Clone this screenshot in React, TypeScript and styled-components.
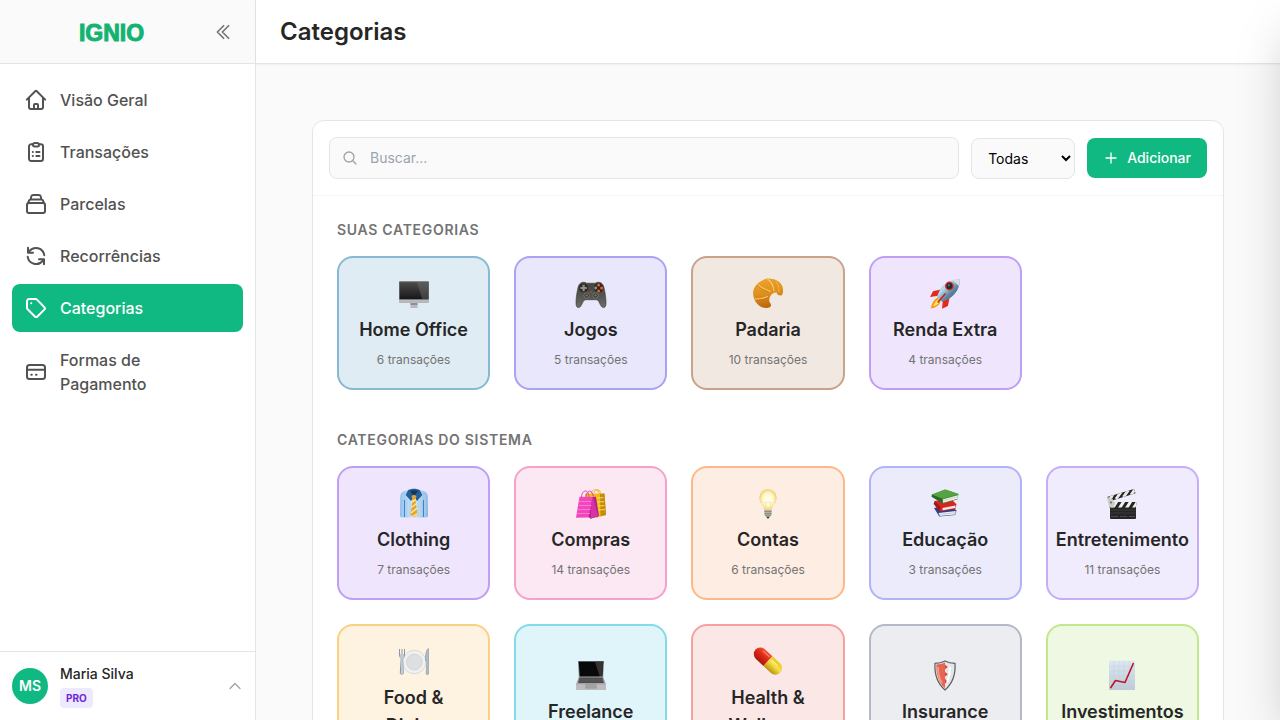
import React from "react";
import styled, { createGlobalStyle } from "styled-components";
import { HiOutlineChevronDoubleLeft, HiOutlineChevronUp, HiOutlineMagnifyingGlass, HiOutlinePlus } from "react-icons/hi2";

const GlobalStyle = createGlobalStyle`
  *, *::before, *::after { box-sizing: border-box; }
  body {
    margin: 0;
    background: #fafafa;
    color: #262626;
    font-family: Inter, "Liberation Sans", sans-serif;
    font-size: 16px;
    line-height: 24px;
    -webkit-font-smoothing: antialiased;
  }
  h1, h2, h3, p, ul { margin: 0; padding: 0; }
  button, input, select { font: inherit; }
`;

const Shell = styled.div`
  display: flex;
  height: 100vh;
  overflow: hidden;
`;

const Sidebar = styled.aside`
  display: flex;
  flex-direction: column;
  flex: 0 0 256px;
  background: #fff;
  border-right: 1px solid #e5e5e5;
`;

const SidebarTop = styled.div`
  display: grid;
  grid-template-columns: 32px 1fr 32px;
  align-items: center;
  height: 64px;
  padding: 0 16px;
  background: #fafafa;
  border-bottom: 1px solid #e5e5e5;
`;

const Logo = styled.a`
  grid-column: 1 / 3;
  justify-self: center;
  padding-top: 2px;
  color: #15b371;
  font-family: "Liberation Sans", Arial, sans-serif;
  font-size: 23px;
  font-weight: 700;
  line-height: 32px;
  text-decoration: none;
  -webkit-text-stroke: 1px #15b371;
`;

const IconButton = styled.button`
  display: grid;
  place-items: center;
  width: 32px;
  height: 32px;
  padding: 0;
  border: 0;
  border-radius: 8px;
  background: transparent;
  color: #737373;
  cursor: pointer;
`;

const Nav = styled.nav`
  flex: 1;
  padding: 12px;
`;

const NavList = styled.ul`
  display: flex;
  flex-direction: column;
  gap: 4px;
  list-style: none;
`;

const NavLink = styled.a<{ $active?: boolean }>`
  display: flex;
  align-items: center;
  gap: 12px;
  padding: 12px;
  border-radius: 8px;
  background: ${(p) => (p.$active ? "#10b981" : "transparent")};
  color: ${(p) => (p.$active ? "#fff" : "#525252")};
  font-weight: 500;
  text-decoration: none;

  svg { flex: none; }
`;

const UserButton = styled.button`
  display: flex;
  align-items: center;
  gap: 12px;
  padding: 12px;
  border: 0;
  border-top: 1px solid #e5e5e5;
  background: #fff;
  color: #a3a3a3;
  text-align: left;
  cursor: pointer;
`;

const Avatar = styled.span`
  display: grid;
  place-items: center;
  width: 36px;
  height: 36px;
  border-radius: 50%;
  background: #10b981;
  color: #fff;
  font-size: 14px;
  font-weight: 600;
`;

const UserInfo = styled.span`
  display: flex;
  flex: 1;
  flex-direction: column;
  align-items: flex-start;
  gap: 4px;
`;

const UserName = styled.span`
  color: #262626;
  font-size: 14px;
  font-weight: 500;
  line-height: 20px;
`;

const Plan = styled.span`
  padding: 0 6px;
  border-radius: 4px;
  background: #ede9fe;
  color: #6d28d9;
  font-size: 10px;
  font-weight: 700;
  line-height: 20px;
`;

const Page = styled.div`
  display: flex;
  flex: 1;
  flex-direction: column;
  min-width: 0;
`;

const PageHeader = styled.header`
  display: flex;
  flex: 0 0 64px;
  align-items: center;
  padding: 0 24px;
  background: #fff;
  border-bottom: 1px solid #e5e5e5;
  box-shadow: 0 1px 2px rgba(0, 0, 0, 0.05);
`;

const Title = styled.h1`
  font-size: 24px;
  font-weight: 600;
  line-height: 32px;
`;

const Main = styled.main`
  flex: 1;
  overflow-y: auto;
  padding: 56px;
  scrollbar-width: none;
`;

const Panel = styled.section`
  border: 1px solid #e5e5e5;
  border-radius: 12px;
  background: #fff;
`;

const Toolbar = styled.form`
  display: flex;
  align-items: center;
  gap: 12px;
  padding: 16px;
  border-bottom: 1px solid #f5f5f5;
`;

const SearchBox = styled.label`
  display: flex;
  flex: 1;
  align-items: center;
  gap: 12px;
  height: 42px;
  padding: 0 12px;
  border: 1px solid #e5e5e5;
  border-radius: 8px;
  background: #fafafa;
  color: #a3a3a3;
`;

const SearchInput = styled.input`
  flex: 1;
  min-width: 0;
  padding: 0;
  border: 0;
  outline: 0;
  background: transparent;
  color: #262626;
  font-size: 14px;
  line-height: 20px;

  &::placeholder { color: #9ca3af; }
`;

const Filter = styled.select`
  width: 104px;
  height: 41px;
  padding: 0 12px;
  border: 1px solid #e5e5e5;
  border-radius: 8px;
  background: #fafafa;
  color: #000;
  font-size: 14px;
`;

const AddButton = styled.button`
  display: flex;
  align-items: center;
  gap: 8px;
  height: 40px;
  padding: 0 16px;
  border: 0;
  border-radius: 8px;
  background: #10b981;
  color: #fff;
  font-size: 14px;
  font-weight: 500;
  cursor: pointer;
`;

const Sections = styled.div`
  display: flex;
  flex-direction: column;
  gap: 40px;
  padding: 24px;
`;

const SectionTitle = styled.h2`
  margin-bottom: 16px;
  color: #737373;
  font-size: 14px;
  font-weight: 600;
  line-height: 20px;
  letter-spacing: 0.05em;
  text-transform: uppercase;
`;

const Grid = styled.div`
  display: grid;
  grid-template-columns: repeat(5, minmax(0, 1fr));
  gap: 24px;
`;

const Card = styled.button<{ $fill: string; $line: string }>`
  display: flex;
  flex-direction: column;
  align-items: center;
  justify-content: center;
  padding: 20px;
  border: 2px solid ${(p) => p.$line};
  border-radius: 16px;
  background: ${(p) => p.$fill};
  color: #262626;
  text-align: center;
  cursor: pointer;
`;

const CardArt = styled.svg`
  flex: none;
  width: 32px;
  height: 32px;
`;

const CardName = styled.span`
  margin-top: 6px;
  font-size: 18px;
  font-weight: 600;
  line-height: 28px;
`;

const CardCount = styled.span`
  margin-top: 8px;
  color: #737373;
  font-size: 12px;
  line-height: 16px;
  white-space: nowrap;
`;

const Drawer = styled.aside`
  position: fixed;
  top: 0;
  right: 0;
  bottom: 0;
  width: 448px;
  background: #fff;
  transform: translateX(100%);
  box-shadow: 0 25px 50px -12px rgba(0, 0, 0, 0.25);
`;

/* ---------- navigation icons ---------- */

const NavIcon = ({ children }: { children: React.ReactNode }) => (
  <svg width="24" height="24" viewBox="0 0 24 24" fill="none" stroke="currentColor" strokeWidth="2" strokeLinecap="round" strokeLinejoin="round" aria-hidden="true">
    {children}
  </svg>
);

const navItems = [
  {
    label: "Visão Geral",
    icon: (
      <NavIcon>
        <path d="M2.8 11.6 11.2 3.2a1.15 1.15 0 0 1 1.6 0l8.4 8.4M5 9.6v9.6A1.8 1.8 0 0 0 6.8 21h10.4a1.8 1.8 0 0 0 1.8-1.8V9.6M10 21v-4a1 1 0 0 1 1-1h2a1 1 0 0 1 1 1v4" />
      </NavIcon>
    ),
  },
  {
    label: "Transações",
    icon: (
      <NavIcon>
        <path d="M9 4.200H7.200A2.200 2.200 0 0 0 5 6.400v12.400A2.200 2.200 0 0 0 7.200 21h9.600a2.200 2.200 0 0 0 2.200-2.200V6.400a2.200 2.200 0 0 0-2.200-2.200H15" />
        <path d="M11 3h2a2 2 0 0 1 2 2v.2a1.300 1.300 0 0 1-1.300 1.300h-3.400A1.300 1.300 0 0 1 9 5.200V5a2 2 0 0 1 2-2Z" />
        <path d="M8.800 12h.1M12.300 12h3.200M8.800 16h.1M12.300 16h3.200" />
      </NavIcon>
    ),
  },
  {
    label: "Parcelas",
    icon: (
      <NavIcon>
        <rect x="3" y="11" width="18" height="10" rx="2" />
        <path d="M4 11.200 5 8.700a1.700 1.700 0 0 1 1.600-1.200h10.800A1.700 1.700 0 0 1 19 8.700l1 2.500M6.700 7.300l.5-2.600A1.900 1.900 0 0 1 9 3h6a1.900 1.900 0 0 1 1.800 1.700l.5 2.600" />
      </NavIcon>
    ),
  },
  {
    label: "Recorrências",
    icon: (
      <NavIcon>
        <path d="M20.300 11.200A8.500 8.500 0 0 0 5.300 7.200L4 8.600M4 3.800v5h5M3.700 12.800a8.500 8.500 0 0 0 15 4L20 15.400M20 20.200v-5h-5" />
      </NavIcon>
    ),
  },
  {
    label: "Categorias",
    active: true,
    icon: (
      <NavIcon>
        <path d="M5.200 3h6.200a2.200 2.200 0 0 1 1.600.65l7.300 7.500a1.800 1.800 0 0 1 0 2.500l-6.900 6.800a1.800 1.800 0 0 1-2.500 0L3.650 13.300A2.200 2.200 0 0 1 3 11.700V5.200A2.200 2.200 0 0 1 5.200 3Z" />
        <path d="M7.200 7.200h.05" />
      </NavIcon>
    ),
  },
  {
    label: "Formas de Pagamento",
    icon: (
      <NavIcon>
        <rect x="3" y="5" width="18" height="14" rx="2.500" />
        <path d="M3 9.800h18M7.300 14.800h.5M12 14.800h.5" />
      </NavIcon>
    ),
  },
];

/* ---------- category pictures ---------- */

const Picture = ({ children }: { children: React.ReactNode }) => (
  <CardArt viewBox="0 0 32 32" aria-hidden="true">
    {children}
  </CardArt>
);

const Monitor = () => (
  <Picture>
    <defs>
      <linearGradient id="mon" x1="0" y1="0" x2="0" y2="1"><stop offset="0" stopColor="#4b4b4b" /><stop offset="1" stopColor="#161616" /></linearGradient>
      <linearGradient id="monBase" x1="0" y1="0" x2="0" y2="1"><stop offset="0" stopColor="#e0e0e2" /><stop offset="1" stopColor="#b5b6ba" /></linearGradient>
    </defs>
    <path d="M12.500 24h7v5.200l.8.800h-8.600l.8-.8Z" fill="#b9babe" />
    <rect x="1" y="3.300" width="30" height="21.700" rx=".8" fill="url(#monBase)" />
    <path d="M1.800 3.300h28.400a.8.8 0 0 1 .8.800V21.500H1V4.100a.8.8 0 0 1 .8-.8Z" fill="#6b6b6d" />
    <path d="M1.800 4.200h28.400v17H1.800Z" fill="url(#mon)" />
    <path d="M19 4.200h11.200v17h-6Z" fill="#777" opacity=".4" />
    <path d="M12.500 25h7v2h-7Z" fill="#8f9094" />
  </Picture>
);

const Gamepad = () => (
  <Picture>
    <defs>
      <linearGradient id="pad" x1="0" y1="0" x2="0" y2="1"><stop offset="0" stopColor="#42433f" /><stop offset=".5" stopColor="#52534e" /><stop offset="1" stopColor="#6c6d68" /></linearGradient>
    </defs>
    <path d="M5.500 5.200c1.800-1.300 4.600-1.300 6.200 0h8.600c1.600-1.300 4.400-1.300 6.200 0 1.500 1 2.200 2.800 2.900 6.300.9 4.500 1.700 9.500 1.600 13.500 0 3-.8 4.600-2.500 4.600-1.800 0-2.800-2-4.200-5-1-2-1.800-2.900-3-2.900H10.700c-1.200 0-2 .9-3 2.900-1.400 3-2.400 5-4.200 5C1.800 29.600 1 28 1 25c-.1-4 .7-9 1.600-13.500.7-3.500 1.400-5.300 2.900-6.300Z" fill="url(#pad)" stroke="#343530" strokeWidth=".6" />
    <circle cx="8.600" cy="10" r="4.700" fill="#292a28" stroke="#713f21" strokeWidth=".5" />
    <path d="M7.500 6.800h2.200v2.100h2.100v2.200H9.700v2.100H7.500v-2.100H5.400V8.900h2.100Z" fill="#8b9390" />
    <circle cx="23.600" cy="10" r="4.700" fill="#292a28" />
    <g fill="#f15a24"><circle cx="23.600" cy="7" r="1.500" /><circle cx="26.600" cy="10" r="1.500" /><circle cx="23.600" cy="13" r="1.500" /></g><circle cx="20.700" cy="10" r="1.400" fill="#9d9187" />
    <g fill="#20211f" stroke="#8b8d87" strokeWidth=".8"><circle cx="11.600" cy="17.500" r="2.600" /><circle cx="20.500" cy="17.500" r="2.600" /></g>
    <g fill="#737a7a"><circle cx="11.600" cy="17.500" r="1.300" /><circle cx="20.500" cy="17.500" r="1.300" /></g>
    <circle cx="16" cy="14" r=".8" fill="#de5125" />
  </Picture>
);

const Croissant = () => (
  <Picture>
    <defs>
      <linearGradient id="cro" x1="0.300" y1="0" x2=".5" y2="1"><stop offset="0" stopColor="#eca52b" /><stop offset=".55" stopColor="#dd8d1c" /><stop offset="1" stopColor="#b8630d" /></linearGradient>
    </defs>
    <path d="M10 2.800c3-2.600 7.300-2.600 10.500-1.800 4 .8 8.200 3 9.800 7.200 1.200 3 .9 7.200-.4 8.800-1.200 1-3.400.4-4.500-.4l-.8-2.100c-3-.3-5.900 1.900-6.900 4.900-.8 2.600-.5 4 .2 5.400 1.600 1.300 1.500 3.400 0 4.500-4 1.500-9.600.4-12.500-3.200C2.300 22.700.6 18 1.200 13.500 2 8.700 5.500 4.600 10 2.800Z" fill="url(#cro)" />
    <path d="M6 6.500c2 2.500 7 5 12.500 7M2.500 21c4.500.4 9.500-.8 13.500-2.500M15.500 1c3.500 2.500 6 6.500 6.500 12" fill="none" stroke="#f8cd70" strokeWidth="1.100" />
    <path d="M5.500 7.500c2 2.500 6.500 4.800 11.500 6.800M3 22c4.500.5 9-.6 13-2.300" fill="none" stroke="#b4630d" strokeWidth=".6" opacity=".7" />
    <path d="M23.500 3c2.500 2.500 4 6.500 3.500 11" fill="none" stroke="#f5bd55" strokeWidth=".8" />
  </Picture>
);

const Rocket = () => (
  <Picture>
    <defs>
      <linearGradient id="roc" x1="0" y1="0" x2="1" y2="1"><stop offset="0" stopColor="#5c9cc8" /><stop offset=".35" stopColor="#b9dced" /><stop offset=".6" stopColor="#5f86a0" /><stop offset="1" stopColor="#294b65" /></linearGradient>
    </defs>
    <path d="M11.500 11.500 4 13.200 1 19l8.500-1.200ZM20.500 20l-1.600 8-5.900 2.800.8-7.800Z" fill="#e6281b" />
    <path d="M8.700 19.500C4.500 21.500 2.600 26 1.800 30.500c3.700-.6 7.300-2 9.800-6.300Z" fill="#f59b1c" />
    <path d="M9 21.500c-2.500 1.800-4 4.500-4.800 6.800 2.300-.6 4.700-1.800 6.300-4.300Z" fill="#ffee51" />
    <path d="M30.800 1.200C23 .8 15.500 5 11 11.500L7.900 18.700l5.400 5.300 7-3.500C27 16 31.200 9 30.800 1.200Z" fill="url(#roc)" />
    <path d="M30.800 1.200c-2.500-.1-5 .3-7 1.100l6 5.800c.8-2.100 1.100-4.500 1-6.900Z" fill="#d9dedf" />
    <path d="m16.500 15.500-7.800 9" stroke="#c52320" strokeWidth="1.500" />
    <circle cx="20.400" cy="8" r="4.400" fill="#cf2a21" /><circle cx="20.400" cy="8" r="3" fill="#202b35" /><circle cx="19.800" cy="7.200" r="1" fill="#647e90" />
  </Picture>
);

const Shirt = () => (
  <Picture>
    <defs>
      <linearGradient id="shi" x1="0" y1="0" x2="1" y2="0"><stop offset="0" stopColor="#8dbdea" /><stop offset=".5" stopColor="#d9edfb" /><stop offset="1" stopColor="#83b6e4" /></linearGradient>
    </defs>
    <path d="M8 2.500h16c3.500.8 5.500 2.500 5.700 5.500l.3 19c0 1.700-.8 2.500-2.500 2.500h-23C2.800 29.500 2 28.700 2 27l.3-19C2.500 5 4.500 3.300 8 2.500Z" fill="url(#shi)" />
    <path d="M5 6v23M8.700 10v19M12 13v16M20 13v16M23.500 10v19M27 6v23" stroke="#a9d1f2" strokeWidth="1" />
    <path d="M6.500 12v17M25.500 12v17" stroke="#3c78b2" strokeWidth=".9" />
    <path d="M10 2.200C13 .2 19 .2 22 2.200l2.300 4.900-5.300 6-3-4.200-3 4.200-5.300-6Z" fill="#255f98" />
    <path d="M12 3.200c2.500-1.400 5.500-1.400 8 0L16 8Z" fill="#12385f" />
    <path d="m13.500 8 2.500-1.300L18.500 8l-1 3.600 2 14.900-3.500 3-3.500-3 2-14.900Z" fill="#e5a52c" />
    <path d="m14 14 3.800-2.500M13.300 19.500l5.300-4M12.900 24.800l6.300-4.600M15 28.500l4.300-3" stroke="#fbe5aa" strokeWidth="1.500" />
  </Picture>
);

const Bags = () => (
  <Picture>
    <path d="M16 6C16.500.5 23.500.5 24.500 6M19 5c2-5 6.500-4 6.500 1" fill="none" stroke="#e8b62b" strokeWidth="1" />
    <path d="m10 5.800 19.500-.3 1.500 21.500-9 2.500L11 27Z" fill="#efbd18" />
    <path d="m25 6 4.500-.5L31 27l-5.500 1.300Z" fill="#c38b0b" />
    <path d="m20 10 8.500-.3M21 14l8-.3M21.500 18l8-.3M22 22l8-.4" stroke="#ffe267" strokeWidth=".9" />
    <path d="m4.500 8.800 13.500.2 5 20.300-22 .5Z" fill="#f246bd" />
    <path d="m18 9 3-.2L24 28l-8.500 2.800-2-2Z" fill="#ba238d" />
    <path d="M17.700 9 23 27.800l-7.500 3 1-16Z" fill="#d633a6" />
    <path d="M4 13.500h12M3.500 17.500h13M2.500 21.500h13M2 25.500h13" stroke="#ff7ad6" strokeWidth=".9" />
    <path d="M6.500 9C7 1.500 13.500.5 14 9M11 9c.5-7.500 6.500-8 7.300-.3" fill="none" stroke="#df3bac" strokeWidth="1" />
  </Picture>
);

const Bulb = () => (
  <Picture>
    <defs>
      <radialGradient id="bul"><stop offset="0" stopColor="#fffef0" /><stop offset=".6" stopColor="#fff8cc" /><stop offset="1" stopColor="#efd273" /></radialGradient>
    </defs>
    <path d="M16 1a8.700 8.700 0 0 0-8.700 8.700c0 5 4.500 7.700 5 12.300h7.400c.5-4.600 5-7.300 5-12.300A8.700 8.700 0 0 0 16 1Z" fill="url(#bul)" />
    <path d="M14 21.500 13 14l2 1 1-1 1 1 2-1-1 7.500" fill="none" stroke="#efe0a6" strokeWidth=".6" />
    <path d="M12.400 22h7.200v5l-1.800 2h-3.600l-1.800-2Z" fill="#b3b1a8" />
    <path d="M12.400 23.500h7.200M12.400 25.500h7.200M13 27.300h6" stroke="#7d7e79" strokeWidth=".7" /><path d="M14.300 28.800h3.400l-1.100 1.700h-1.200Z" fill="#3b3d3c" />
  </Picture>
);

const Books = () => (
  <Picture>
    <path d="m5 20 16-3 6.500 5.600-1.200 4.400-16 1.400Z" fill="#293f91" /><path d="m9.500 25 17.200-2-.3 3.500-15.500 1.400Z" fill="#edf0f3" />
    <path d="m5.500 13 16-2.500 6 5.700-1.200 5-15.500 2.400Z" fill="#d6261e" /><path d="m13.500 20 13-2.500-.2 2.500-12.600 2.200Z" fill="#f3efeb" />
    <path d="m5.500 13-.8 3 5.800 7.500 1-4.400Z" fill="#9f1916" />
    <path d="M2.800 6.500 16.300 1.500 29.500 6l-1.200 5.500L14 15.500Z" fill="#3f8f34" /><path d="m13.500 11.500 15.400-4.200-.4 3.500L14 14.700Z" fill="#f5f4ef" />
    <path d="M2.800 6.500 16.300 1.500 29.500 6l-16 4.800Z" fill="#56a343" /><path d="m2.800 6.500-.3 2.200L13.700 15.500l-.2-4.700Z" fill="#28692a" />
    <path d="m14 12.800 14.500-4M10.500 26.400l16-1.700" stroke="#a4aaaf" strokeWidth=".5" />
  </Picture>
);

const Clapper = () => (
  <Picture>
    <defs><clipPath id="cl1"><path d="m1 9 27-8 1.500 4.200L3 13.500Z" /></clipPath><clipPath id="cl2"><path d="M3.500 14H31l-1.500 5.500h-26Z" /></clipPath></defs>
    <path d="M4 18h26v12a1 1 0 0 1-1 1H5a1 1 0 0 1-1-1Z" fill="#262626" />
    <path d="M4 22h26M4 25h26" stroke="#4a4a4a" strokeWidth=".6" /><path d="M5 28.500h24" stroke="#666" strokeWidth=".6" strokeDasharray="7 2" />
    <g clipPath="url(#cl1)"><path d="M0 0h32v15H0Z" fill="#252525" /><path d="m3 13 4-7M10 11l5-7M17.500 9l5-7M25 7l5-7" stroke="#ebebe6" strokeWidth="3" /></g>
    <g clipPath="url(#cl2)"><path d="M0 13h32v8H0Z" fill="#252525" /><path d="m6 21 5-8M13 21l5-8M20 21l5-8M27 21l5-8" stroke="#f2f2ed" strokeWidth="3" /></g>
    <path d="m1 9 5 1 3 6-2 3.500H3.500L2 14Z" fill="#cbcbc7" /><circle cx="5" cy="14.500" r="1" fill="#666" />
  </Picture>
);

const Plate = () => (
  <Picture>
    <circle cx="16.300" cy="16" r="11.700" fill="#f1f1f1" stroke="#c5c8cb" strokeWidth=".6" /><circle cx="16.300" cy="16" r="8" fill="#dddfe1" stroke="#c3c6c9" strokeWidth=".5" />
    <path d="M1.500 3v6c0 2 1 3 1.700 3.400L2.300 27c0 1.700 3 1.700 3 0l-.7-14.600C5.600 12 6.500 11 6.500 9V3M4 3v8" fill="none" stroke="#8999a8" strokeWidth="1" />
    <path d="M2 8h4v3l-1.300 1v15.500H3V12l-1-1Z" fill="#bfcbd4" />
    <path d="M30.500 2.500c-2.300 1.400-3.200 5.500-3 12.500l1.300 1-.6 11.500c0 1.500 2.300 1.500 2.300 0Z" fill="#aebbc7" stroke="#8496a6" strokeWidth=".6" />
  </Picture>
);

const Laptop = () => (
  <Picture>
    <path d="M3 1h26l-1 17H4Z" fill="#777" /><path d="M3.800 1.700h24.400l-1 15.300H4.800Z" fill="#090909" /><path d="M20 1.700h8.200l-1 15.300h-2.400Z" fill="#333" />
    <path d="M3.800 16.500h24.400L31 24.500v5.500H1v-5.500Z" fill="#a7a7a9" /><path d="M4.500 17.500h23l1.400 5.500H3.100Z" fill="#4b4b4d" />
    <path d="M4 19.200h24M3.700 21h24.600" stroke="#757577" strokeWidth=".4" /><path d="M1 24.500h30V30H1Z" fill="#bdbdbf" /><path d="M11 24h10l.5 4.200h-11Z" fill="#a4a4a7" stroke="#8e8e91" strokeWidth=".4" />
  </Picture>
);

const Pill = () => (
  <Picture>
    <defs><linearGradient id="pilR" x1="0" y1="0" x2="0" y2="1"><stop offset="0" stopColor="#ef543a" /><stop offset=".45" stopColor="#e02916" /><stop offset="1" stopColor="#aa170a" /></linearGradient><linearGradient id="pilY" x1="0" y1="0" x2="0" y2="1"><stop offset="0" stopColor="#e7c71d" /><stop offset=".4" stopColor="#f7e34c" /><stop offset="1" stopColor="#bd930b" /></linearGradient></defs>
    <g transform="rotate(43 16 15)"><path d="M16 8.500H5.700a6.600 6.600 0 0 0 0 13.200H16Z" fill="url(#pilR)" /><path d="M16 8.500h10.300a6.600 6.600 0 0 1 0 13.200H16Z" fill="url(#pilY)" /><path d="M6 11h8" stroke="#f4806a" strokeWidth="1.200" strokeLinecap="round" /><path d="M18 12h8" stroke="#fff07f" strokeWidth="1.300" strokeLinecap="round" /></g>
  </Picture>
);

const Shield = () => (
  <Picture>
    <path d="M16 1c3 1.600 6.200 2.300 10 2.300.8 12.500-2.400 20.200-10 26.700C8.400 23.500 5.200 15.800 6 3.300c3.800 0 7-.7 10-2.300Z" fill="#e4e6e8" stroke="#5c5e61" strokeWidth="1.200" />
    <path d="M16 2.500c-2.500 1.200-5.500 2-8.600 2C7 14.300 9.500 22.300 16 28.300Z" fill="#e86554" />
    <path d="M16 4.800 18.800 7 16 9.200V12l2.800 2.200L16 16.400V19l2.800 2-2.800 2.500Z" fill="#d94336" />
    <path d="M9 7c0 7 1.200 12 4 16" fill="none" stroke="#f59c8f" strokeWidth="1.800" /><path d="M21 7c-.1 6-1.100 11-3 15" fill="none" stroke="#fff" strokeWidth="2" />
  </Picture>
);

const Chart = () => (
  <Picture>
    <defs><linearGradient id="cha" x1="0" y1="0" x2="0" y2="1"><stop offset="0" stopColor="#dce7f0" /><stop offset="1" stopColor="#bfcbd6" /></linearGradient></defs>
    <path d="M3 .700h26V30H3Z" fill="url(#cha)" /><path d="M3 6h26M3 11h26M3 16h26M3 21h26M3 26h26M8 1v29M13 1v29M18 1v29M23 1v29" stroke="#b6c9db" strokeWidth=".3" />
    <path d="m4.500 28 5-7.500 9.500 2L27.500 3" fill="none" stroke="#bd1620" strokeWidth="1.600" strokeLinejoin="round" />
  </Picture>
);

type Category = { name: string; count: number; fill: string; line: string; Art: React.ComponentType };

const own: Category[] = [
  { name: "Home Office", count: 6, fill: "#e0ecf4", line: "#87b9d3", Art: Monitor },
  { name: "Jogos", count: 5, fill: "#e9e7fb", line: "#aaa3f3", Art: Gamepad },
  { name: "Padaria", count: 10, fill: "#f1e8e2", line: "#c9a28a", Art: Croissant },
  { name: "Renda Extra", count: 4, fill: "#efe6fe", line: "#be9ff5", Art: Rocket },
];

const system: Category[] = [
  { name: "Clothing", count: 7, fill: "#efe6fe", line: "#be9ff5", Art: Shirt },
  { name: "Compras", count: 14, fill: "#fce8f3", line: "#f4a2cb", Art: Bags },
  { name: "Contas", count: 6, fill: "#feede3", line: "#fbb98b", Art: Bulb },
  { name: "Educação", count: 3, fill: "#ecebfc", line: "#b1b2f8", Art: Books },
  { name: "Entretenimento", count: 11, fill: "#f0ebfd", line: "#c5adf9", Art: Clapper },
  { name: "Food & Dining", count: 12, fill: "#fef2e0", line: "#fad083", Art: Plate },
  { name: "Freelance", count: 2, fill: "#e0f5fa", line: "#83dae8", Art: Laptop },
  { name: "Health & Wellness", count: 8, fill: "#fce7e7", line: "#f6a1a1", Art: Pill },
  { name: "Insurance", count: 1, fill: "#ecedf0", line: "#b3b9c6", Art: Shield },
  { name: "Investimentos", count: 9, fill: "#eef8e2", line: "#c1e88d", Art: Chart },
];

const CategoryGroup = ({ title, items }: { title: string; items: Category[] }) => (
  <section>
    <SectionTitle>{title}</SectionTitle>
    <Grid>
      {items.map(({ name, count, fill, line, Art }) => (
        <Card key={name} type="button" $fill={fill} $line={line}>
          <Art />
          <CardName>{name}</CardName>
          <CardCount>{count} transações</CardCount>
        </Card>
      ))}
    </Grid>
  </section>
);

export default function App() {
  return (
    <>
      <GlobalStyle />
      <Shell>
        <Sidebar>
          <SidebarTop>
            <Logo href="#">IGNIO</Logo>
            <IconButton type="button" aria-label="Recolher menu">
              <HiOutlineChevronDoubleLeft size={20} strokeWidth={2} />
            </IconButton>
          </SidebarTop>
          <Nav>
            <NavList>
              {navItems.map((item) => (
                <li key={item.label}>
                  <NavLink href="#" $active={item.active} aria-current={item.active ? "page" : undefined}>
                    {item.icon}
                    <span>{item.label}</span>
                  </NavLink>
                </li>
              ))}
            </NavList>
          </Nav>
          <UserButton type="button">
            <Avatar>MS</Avatar>
            <UserInfo>
              <UserName>Maria Silva</UserName>
              <Plan>PRO</Plan>
            </UserInfo>
            <HiOutlineChevronUp size={16} strokeWidth={2} />
          </UserButton>
        </Sidebar>
        <Page>
          <PageHeader>
            <Title>Categorias</Title>
          </PageHeader>
          <Main>
            <Panel>
              <Toolbar onSubmit={(event) => event.preventDefault()}>
                <SearchBox>
                  <HiOutlineMagnifyingGlass size={16} strokeWidth={2} />
                  <SearchInput type="search" placeholder="Buscar..." aria-label="Buscar" />
                </SearchBox>
                <Filter aria-label="Filtrar categorias" defaultValue="Todas">
                  <option>Todas</option>
                  <option>Receitas</option>
                  <option>Despesas</option>
                </Filter>
                <AddButton type="button">
                  <HiOutlinePlus size={16} strokeWidth={2} />
                  Adicionar
                </AddButton>
              </Toolbar>
              <Sections>
                <CategoryGroup title="Suas categorias" items={own} />
                <CategoryGroup title="Categorias do sistema" items={system} />
              </Sections>
            </Panel>
          </Main>
        </Page>
      </Shell>
      <Drawer aria-hidden="true" />
    </>
  );
}
